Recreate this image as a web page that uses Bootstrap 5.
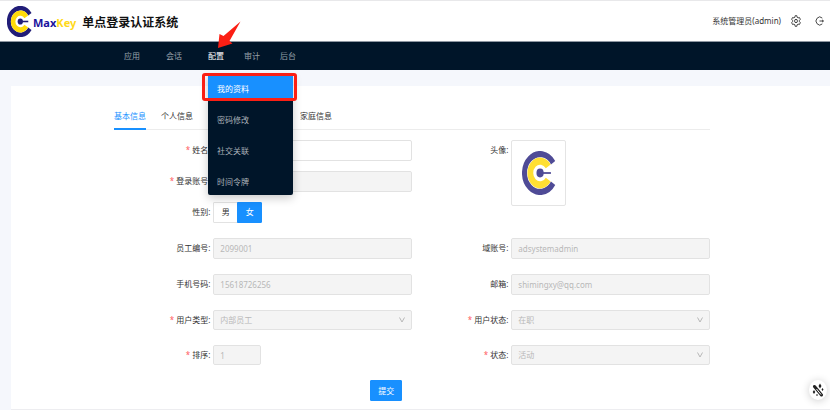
<!DOCTYPE html>
<html lang="zh-CN">
<head>
<meta charset="utf-8">
<meta name="viewport" content="width=device-width, initial-scale=1">
<title>MaxKey 单点登录认证系统</title>
<link rel="stylesheet" href="https://cdn.jsdelivr.net/npm/bootstrap@5.3.0/dist/css/bootstrap.min.css">
<style>
  body { font: 8px/12px "Noto Sans", "Noto Sans CJK SC", sans-serif; color: #333; background: #f5f7fc; }
  .topbar { height: 41px; background: #fff; border-top: 1px solid #e8e8ea; padding: 0 6px 0 7px; }
  .brand { color: #111; font-size: 12px; line-height: 16px; font-weight: 700; gap: 1px; }
  .brand .latin { font-size: 11px; padding-top: 3px; margin-right: 5px; }
  .brand .product { padding-top: 3px; }
  .brand .navy { color: #1a139c; }
  .brand .gold { color: #ffd91a; }
  .tools { gap: 10px; }
  .icon-btn { border: 0; background: none; padding: 0; line-height: 0; color: #333; }
  .mainnav { height: 29px; background: #001529; border-top: 1px solid #8e97a2; padding-left: 124px; }
  .mainnav ul { gap: 20px; }
  .mainnav li.wide { padding-right: 6px; }
  .mainnav .nav-link { padding: 8px 0; color: #99a1a9; }
  .mainnav .nav-link.active { color: #fff; }
  .submenu { position: absolute; z-index: 10; left: 0; top: 33px; width: 85px; background: #001529; border-radius: 0 0 2px 2px; box-shadow: 0 3px 10px rgba(0,0,0,.22); padding-bottom: 1px; display: grid; gap: 5px; }
  .submenu a { display: block; height: 26px; padding: 8px 9px 6px; color: #aab1b8; text-decoration: none; }
  .submenu a.active { background: #1890ff; color: #fff; }
  .callout-box { position: absolute; z-index: 12; left: -6px; top: 31px; width: 95px; height: 28px; border: 3px solid #fb1f14; border-radius: 3px; pointer-events: none; }
  .callout-arrow { position: absolute; z-index: 12; left: 8px; top: -22px; pointer-events: none; }
  .panel { background: #fff; margin: 16px 0 0 11px; padding: 24px 120px 8px 103px; border-bottom: 1px solid #ededf0; }
  .tabs { gap: 15px; border-bottom: 1px solid #ececec; margin-bottom: 10px; }
  .tabs .nav-link { padding: 0 0 6px; color: #333; border-bottom: 2px solid transparent; margin-bottom: -1px; }
  .tabs .nav-link.active { color: #1890ff; border-bottom-color: #1890ff; }
  .tabs .last { margin-left: 92px; }
  .fields { display: grid; gap: 15px; }
  .stack { display: grid; gap: 10px; }
  .lbl { text-align: right; padding-right: 3px; line-height: 20px; white-space: nowrap; }
  .req::before { content: "*"; color: #ff5a5f; margin-right: 2px; }
  .form-control, .form-select { height: 21px; min-height: 0; font-size: 8px; line-height: 12px; padding: 3px 6px; border: 1px solid #e2e2e2; border-radius: 2px; color: #333; }
  .form-control:disabled, .form-select:disabled { background-color: #f4f4f4; color: #b8b8b8; opacity: 1; }
  .form-select { height: 20px; background-image: url("data:image/svg+xml,%3Csvg xmlns='http://www.w3.org/2000/svg' viewBox='0 0 8 8'%3E%3Cpath d='M1.5 1.5 4 6 6.500 1.500' fill='none' stroke='%23b8b8b8'/%3E%3C/svg%3E"); background-size: 8px 8px; background-position: right 5px center; }
  .order { width: 48px; height: 20px; }
  .btn { --bs-btn-font-size: 8px; --bs-btn-line-height: 12px; --bs-btn-border-radius: 1px; height: 21px; padding: 3px 7px; }
  .btn-pick { --bs-btn-border-color: #e2e2e2; --bs-btn-color: #333; --bs-btn-active-bg: #1890ff; --bs-btn-active-color: #fff; --bs-btn-active-border-color: #1890ff; width: 25px; }
  .btn-send { --bs-btn-bg: #1890ff; --bs-btn-border-color: #1890ff; --bs-btn-color: #fff; --bs-btn-hover-color: #fff; --bs-btn-hover-bg: #40a9ff; margin-left: 43%; }
  .avatar { width: 55px; height: 66px; border: 1px solid #e4e4e4; border-radius: 2px; }
  .wand { position: fixed; right: 3px; bottom: 10px; width: 18px; height: 20px; border-radius: 50%; background: #fff; box-shadow: 0 1px 9px rgba(0,0,0,.2); display: flex; align-items: center; justify-content: center; }
</style>
<script src="https://cdn.jsdelivr.net/npm/bootstrap@5.3.0/dist/js/bootstrap.bundle.min.js"></script>
</head>
<body>
<header class="topbar d-flex align-items-center justify-content-between">
  <div class="brand d-flex align-items-center">
    <svg width="25" height="31" viewBox="0 0 94 100" preserveAspectRatio="none" fill="none" aria-hidden="true">
      <path d="M86 26.600A43 43 0 1 0 86 73.400" stroke="#211d78" stroke-width="15"/>
      <path d="M72.500 35A27 27 0 1 0 72.500 65" stroke="#ffdb0a" stroke-width="17"/>
      <circle cx="50" cy="50" r="10" fill="#211d78"/><path d="M50 50H80" stroke="#211d78" stroke-width="5"/>
    </svg>
    <span class="latin"><span class="navy">Max</span><span class="gold">Key</span></span>
    <span class="product">单点登录认证系统</span>
  </div>
  <div class="tools d-flex align-items-center">
    <span>系统管理员(admin)</span>
    <button class="icon-btn" type="button" aria-label="设置">
      <svg width="10" height="12" viewBox="0 0 12 12" preserveAspectRatio="none" fill="none" stroke="currentColor"><path d="M5 .7H7L7.400 2.300 8.500 2.900 10.100 2.500 11.200 4.300 10.100 5.400V6.600L11.200 7.700 10.100 9.500 8.500 9.100 7.400 9.700 7 11.300H5L4.600 9.700 3.500 9.100 1.900 9.500.8 7.700 1.900 6.600V5.400L.8 4.300 1.900 2.500 3.500 2.900 4.600 2.300Z"/><circle cx="6" cy="6" r="1.700"/></svg>
    </button>
    <button class="icon-btn ms-1" type="button" aria-label="退出">
      <svg width="9" height="10" viewBox="0 0 9 10" fill="none" stroke="currentColor"><path d="M7.300 2.100A3.700 4 0 1 0 7.300 7.900M4.500 5H8.500M7 3.800 8.400 5 7 6.200" stroke-width=".9"/></svg>
    </button>
  </div>
</header>
<nav class="mainnav">
  <ul class="d-flex list-unstyled mb-0">
    <li class="wide"><a class="nav-link" href="#">应用</a></li>
    <li class="wide"><a class="nav-link" href="#">会话</a></li>
    <li class="position-relative">
      <a class="nav-link active" href="#">配置</a>
      <div class="submenu">
        <a class="active" href="#">我的资料</a>
        <a href="#">密码修改</a>
        <a href="#">社交关联</a>
        <a href="#">时间令牌</a>
      </div>
      <div class="callout-box"></div>
      <svg class="callout-arrow" width="26" height="30" viewBox="0 0 26 30" aria-hidden="true"><path d="M24.500 1.500 7.500 16 3.500 14 2 28 16.500 23.500 13.500 21Z" fill="#fb1f14"/></svg>
    </li>
    <li><a class="nav-link" href="#">审计</a></li>
    <li><a class="nav-link" href="#">后台</a></li>
  </ul>
</nav>
<main class="panel">
  <ul class="tabs d-flex list-unstyled">
    <li><a class="nav-link active" href="#">基本信息</a></li>
    <li><a class="nav-link" href="#">个人信息</a></li>
    <li class="last"><a class="nav-link" href="#">家庭信息</a></li>
  </ul>
  <form class="fields">
    <div class="row g-0">
      <div class="col-6 stack">
        <div class="row g-0"><label class="col-4 lbl req" for="name">姓名:</label><div class="col-8"><input class="form-control" id="name"></div></div>
        <div class="row g-0"><label class="col-4 lbl req" for="account">登录账号:</label><div class="col-8"><input class="form-control" id="account" disabled></div></div>
        <div class="row g-0"><span class="col-4 lbl" id="sex">性别:</span>
          <div class="col-8"><div class="btn-group" role="group" aria-labelledby="sex">
            <input class="btn-check" type="radio" name="sex" id="male"><label class="btn btn-pick" for="male">男</label>
            <input class="btn-check" type="radio" name="sex" id="female" checked><label class="btn btn-pick" for="female">女</label>
          </div></div></div>
      </div>
      <div class="col-6"><div class="row g-0"><span class="col-4 lbl">头像:</span>
        <div class="col-8"><div class="avatar d-flex align-items-center justify-content-center">
          <svg width="34" height="44" viewBox="0 0 94 100" preserveAspectRatio="none" fill="none" role="img" aria-label="头像">
            <path d="M86 26.600A43 43 0 1 0 86 73.400" stroke="#4f4b96" stroke-width="14"/>
            <path d="M72.500 35A27 27 0 1 0 72.500 65" stroke="#ffdf33" stroke-width="16"/>
            <circle cx="50" cy="50" r="10" fill="#4f4b96"/><path d="M50 50H80" stroke="#4f4b96" stroke-width="4"/>
          </svg>
        </div></div></div></div>
    </div>
    <div class="row g-0">
      <label class="col-2 lbl" for="empno">员工编号:</label><div class="col-4"><input class="form-control" id="empno" value="2099001" disabled></div>
      <label class="col-2 lbl" for="domain">域账号:</label><div class="col-4"><input class="form-control" id="domain" value="adsystemadmin" disabled></div>
    </div>
    <div class="row g-0">
      <label class="col-2 lbl" for="mobile">手机号码:</label><div class="col-4"><input class="form-control" id="mobile" value="15618726256" disabled></div>
      <label class="col-2 lbl" for="mail">邮箱:</label><div class="col-4"><input class="form-control" id="mail" value="shimingxy@qq.com" disabled></div>
    </div>
    <div class="row g-0">
      <label class="col-2 lbl req" for="utype">用户类型:</label><div class="col-4"><select class="form-select" id="utype" disabled><option>内部员工</option></select></div>
      <label class="col-2 lbl req" for="ustate">用户状态:</label><div class="col-4"><select class="form-select" id="ustate" disabled><option>在职</option></select></div>
    </div>
    <div class="row g-0">
      <label class="col-2 lbl req" for="order">排序:</label><div class="col-4"><input class="form-control order" id="order" value="1" disabled></div>
      <label class="col-2 lbl req" for="state">状态:</label><div class="col-4"><select class="form-select" id="state" disabled><option>活动</option></select></div>
    </div>
    <div class="d-flex"><button class="btn btn-send" type="submit">提交</button></div>
  </form>
</main>
<button class="icon-btn wand" type="button" aria-label="助手">
  <svg width="12" height="14" viewBox="0 0 12 14"><path d="M2.500 3.500 9.500 12" stroke="#222" stroke-width="3" stroke-linecap="round"/><path d="M4.500 6 9 11.500" stroke="#fff" stroke-width="1"/><path d="M8 .5 9.500 3 8 5.500 6.500 3ZM2 7 3.300 9 2 11 .7 9ZM10.500 5 11.500 6.500 10.500 8 9.500 6.500ZM5 11 6 12 5 13 4 12Z" fill="#222"/></svg>
</button>
</body>
</html>
